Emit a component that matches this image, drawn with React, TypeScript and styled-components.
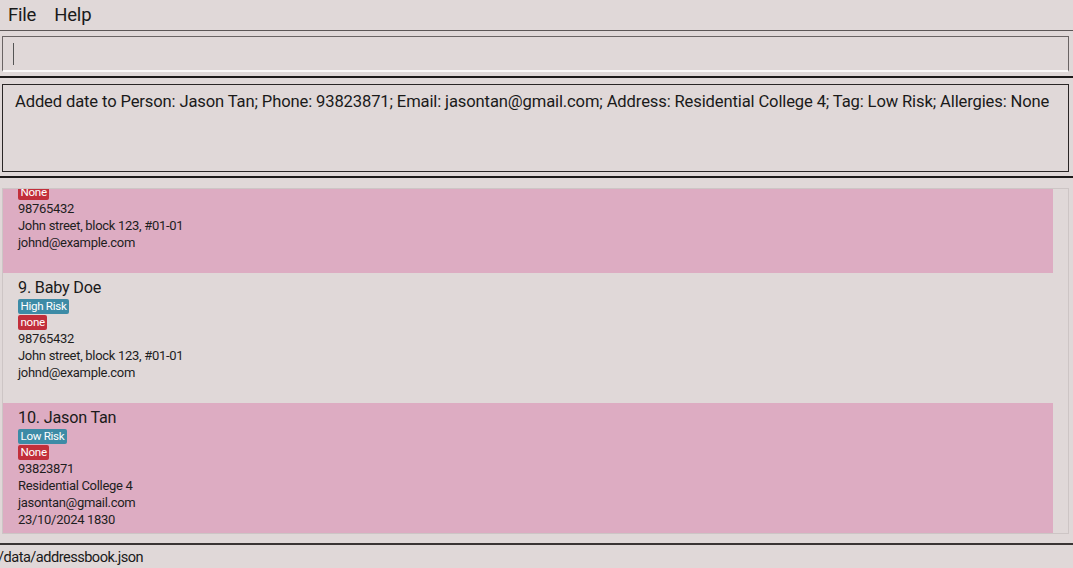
import React from "react";
import styled, { createGlobalStyle } from "styled-components";

const Global = createGlobalStyle`
  html, body { margin: 0; padding: 0; background: #e0d8d8; }
  body { font-family: Roboto, "Liberation Sans", sans-serif; color: #1c1c1c; }
  * { box-sizing: border-box; }
`;

const Window = styled.div`
  width: 1073px;
  height: 568px;
  display: flex;
  flex-direction: column;
  background: #e0d8d8;
  overflow: hidden;
`;

const MenuBar = styled.div`
  height: 31px;
  flex: none;
  display: flex;
  align-items: center;
  gap: 18px;
  padding: 0 0 1px 8px;
  border-bottom: 1px solid #5c5656;
`;

const MenuItem = styled.span`
  font-size: 18.5px;
  line-height: 22px;
  letter-spacing: -0.2px;
  color: #1a1a1a;
`;

const Pane = styled.div<{ $top: number; $bottom: number; $line: string }>`
  flex: none;
  padding: ${(p) => p.$top}px 4px ${(p) => p.$bottom}px 2px;
  border-bottom: 2px solid ${(p) => p.$line};
`;

const CommandBox = styled.div`
  height: 36px;
  border: 1px solid #6a6464;
  border-bottom: 2px solid #fbf8f8;
  display: flex;
  align-items: center;
  padding-left: 10px;
`;

const Caret = styled.span`
  width: 1px;
  height: 22px;
  background: #555;
`;

const ResultBox = styled.div`
  height: 88px;
  border: 1px solid #2a2626;
  padding: 6px 12px;
  font-size: 16.6px;
  letter-spacing: -0.14px;
  line-height: 22px;
  color: #1a1a1a;
  white-space: nowrap;
`;

const ListFrame = styled.div`
  height: 346px;
  border: 1px solid #cdc5c5;
  padding-right: 15px;
  overflow: hidden;
`;

const ListInner = styled.div<{ $offset: number }>`
  margin-top: -${(p) => p.$offset}px;
  display: flex;
  flex-direction: column;
`;

const Card = styled.div<{ $pink: boolean }>`
  height: 130px;
  padding: 4px 15px;
  background: ${(p) => (p.$pink ? "#ddacc2" : "#e0d8d8")};
  display: flex;
  flex-direction: column;
  align-items: flex-start;
`;

const Name = styled.div`
  height: 20px;
  padding-top: 2px;
  font-size: 16.2px;
  letter-spacing: -0.2px;
  line-height: 18px;
  color: #1a1a1a;
  margin-bottom: 1px;
`;

const Tag = styled.span<{ $kind: "risk" | "allergy" }>`
  display: inline-block;
  height: 15px;
  line-height: 15px;
  padding: 0 2.5px;
  margin-top: 1px;
  border-radius: 2px;
  font-size: 11.6px;
  letter-spacing: -0.3px;
  color: #ffffff;
  background: ${(p) => (p.$kind === "risk" ? "#3d8ba6" : "#c22f3b")};
`;

const Detail = styled.div`
  font-size: 13px;
  letter-spacing: -0.3px;
  line-height: 17px;
  color: #1e1e1e;
`;

const StatusBar = styled.div`
  flex: 1;
  display: flex;
  align-items: center;
  padding-top: 1px;
  font-size: 14.6px;
  letter-spacing: -0.52px;
  color: #1a1a1a;
  margin-left: -2px;
`;

type Person = {
  name: string;
  risk: string;
  allergy: string;
  details: string[];
};

const people: Person[] = [
  {
    name: "8. John Doe",
    risk: "High Risk",
    allergy: "None",
    details: ["98765432", "John street, block 123, #01-01", "johnd@example.com"],
  },
  {
    name: "9. Baby Doe",
    risk: "High Risk",
    allergy: "none",
    details: ["98765432", "John street, block 123, #01-01", "johnd@example.com"],
  },
  {
    name: "10. Jason Tan",
    risk: "Low Risk",
    allergy: "None",
    details: ["93823871", "Residential College 4", "jasontan@gmail.com", "23/10/2024 1830"],
  },
];

export default function App() {
  return (
    <Window>
      <Global />
      <MenuBar>
        <MenuItem>File</MenuItem>
        <MenuItem>Help</MenuItem>
      </MenuBar>
      <Pane $top={5} $bottom={4} $line="#1e1a1a">
        <CommandBox>
          <Caret />
        </CommandBox>
      </Pane>
      <Pane $top={6} $bottom={4} $line="#1e1a1a">
        <ResultBox>
          Added date to Person: Jason Tan; Phone: 93823871; Email: jasontan@gmail.com; Address: Residential College 4; Tag: Low Risk; Allergies: None
        </ResultBox>
      </Pane>
      <Pane $top={10} $bottom={9} $line="#3a3434">
        <ListFrame>
          <ListInner $offset={46}>
            {people.map((p, i) => (
              <Card key={p.name} $pink={i % 2 === 0}>
                <Name>{p.name}</Name>
                <Tag $kind="risk">{p.risk}</Tag>
                <Tag $kind="allergy">{p.allergy}</Tag>
                {p.details.map((d) => (
                  <Detail key={d}>{d}</Detail>
                ))}
              </Card>
            ))}
          </ListInner>
        </ListFrame>
      </Pane>
      <StatusBar>/data/addressbook.json</StatusBar>
    </Window>
  );
}
